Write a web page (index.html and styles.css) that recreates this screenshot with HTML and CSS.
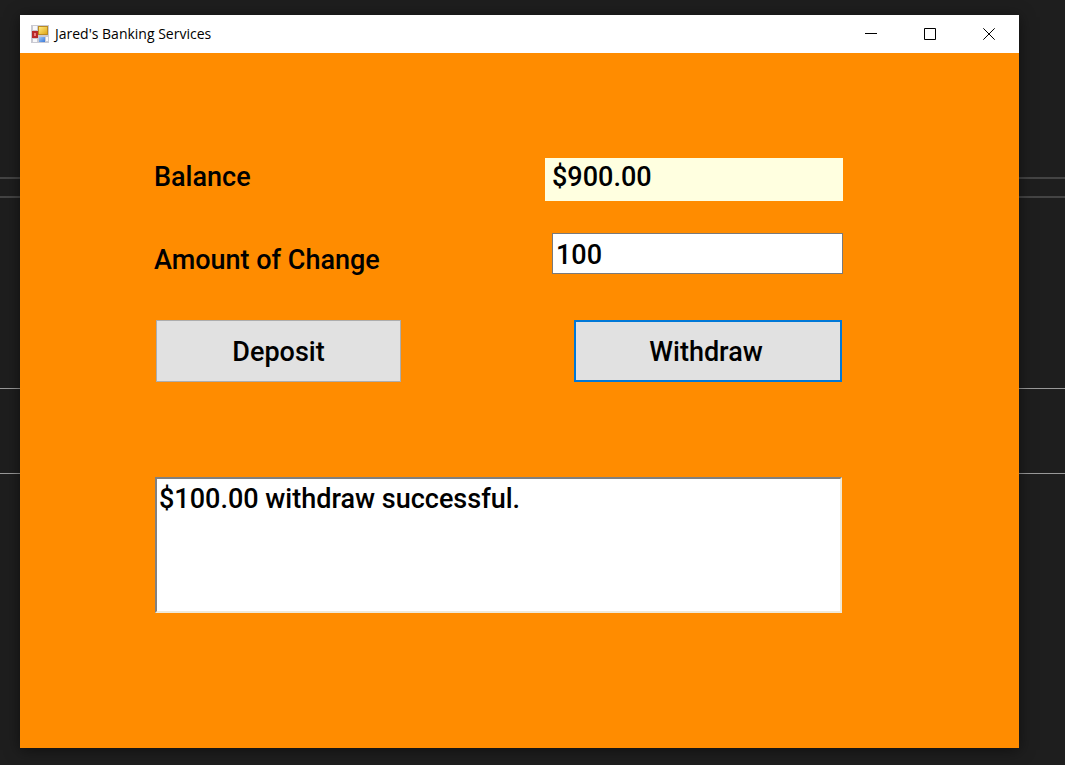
FILE: index.html
```
<!DOCTYPE html>
<html lang="en">
<head>
<meta charset="utf-8">
<title>Jared's Banking Services</title>
<link rel="stylesheet" href="styles.css">
</head>
<body>
<main class="window">
  <header class="titlebar">
    <svg class="app-icon" width="18" height="18" viewBox="0 0 18 18" aria-hidden="true">
      <defs>
        <linearGradient id="gold" x1="0" y1="0" x2="1" y2="1"><stop offset="0" stop-color="#ffe980"/><stop offset="1" stop-color="#e0a818"/></linearGradient>
        <linearGradient id="blue" x1="0" y1="0" x2="1" y2="1"><stop offset="0" stop-color="#9cc8fa"/><stop offset="1" stop-color="#3878d8"/></linearGradient>
      </defs>
      <path fill="#cacad2" d="M0 0h18v18H0z"/>
      <path fill="#f8f8fa" d="M2 1h4v4H2zM2 14h4v3H2zM15 12h2v4h-2z"/>
      <path fill="#b82a2a" d="M1 6h6v7H1z"/>
      <path fill="#e88080" d="M3 8h2v3H3z"/>
      <path fill="#b98a24" d="M7 1h10v9H7z"/>
      <path fill="url(#gold)" d="M8 2h8v7H8z"/>
      <path fill="url(#blue)" d="M8 12h6v5H8z"/>
    </svg>
    <h1 class="title">Jared's Banking Services</h1>
    <div class="controls">
      <button class="control" type="button" aria-label="Minimize"><svg width="12" height="12" viewBox="0 0 12 12"><path d="M0 5.5h12"/></svg></button>
      <button class="control" type="button" aria-label="Maximize"><svg width="12" height="12" viewBox="0 0 12 12"><path d="M.5.5h11v11H.5z"/></svg></button>
      <button class="control" type="button" aria-label="Close"><svg width="12" height="12" viewBox="0 0 12 12"><path d="M.3.3l11.4 11.4M11.7.3L.3 11.7"/></svg></button>
    </div>
  </header>
  <form class="form">
    <div class="row balance-row">
      <label class="label" for="balance">Balance</label>
      <output class="balance" id="balance">$900.00</output>
    </div>
    <div class="row amount-row">
      <label class="label amount-label" for="amount">Amount of Change</label>
      <input class="amount" id="amount" type="text" value="100">
    </div>
    <div class="row action-row">
      <button class="action deposit" type="button">Deposit</button>
      <button class="action withdraw" type="button">Withdraw</button>
    </div>
    <textarea class="log" aria-label="Messages" readonly>$100.00 withdraw successful.</textarea>
  </form>
</main>
</body>
</html>
```
FILE: styles.css
```
* {
  box-sizing: border-box;
}

body {
  display: flex;
  min-height: 100vh;
  margin: 0;
  padding: 15px 46px 17px 20px;
  color: #000;
  background:
    linear-gradient(#444, #444) 0 177px / 100% 2px no-repeat,
    linear-gradient(#444, #444) 0 196px / 100% 2px no-repeat,
    linear-gradient(#999, #999) 0 388px / 100% 1px no-repeat,
    linear-gradient(#999, #999) 0 473px / 100% 1px no-repeat,
    #1e1e1e;
}

.window {
  display: flex;
  flex: 1;
  flex-direction: column;
  background: #ff8c00;
  box-shadow: 0 2px 14px rgba(0, 0, 0, 0.5);
}

.titlebar {
  display: flex;
  align-items: center;
  height: 38px;
  padding: 0 1px 0 11px;
  background: #fff;
}

.title {
  margin: 0 auto 0 6px;
  font: 400 14px/20px "Open Sans", sans-serif;
}

.controls {
  display: flex;
  align-self: stretch;
}

.control {
  display: grid;
  place-items: center;
  width: 59px;
  padding: 0;
  border: 0;
  background: transparent;
}

.control path {
  fill: none;
  stroke: #000;
}

.form {
  display: flex;
  flex-direction: column;
  padding: 105px 176px 48px 134px;
  font: 500 27px/38px Roboto, sans-serif;
}

.row {
  display: flex;
  align-items: flex-start;
  justify-content: space-between;
}

.balance-row {
  margin-bottom: 32px;
}

.balance {
  width: 298px;
  height: 43px;
  padding-left: 7px;
  background: #ffffe0;
}

.amount-row {
  margin-bottom: 41px;
}

.amount-label {
  padding-top: 8px;
}

.amount {
  width: 291px;
  height: 41px;
  padding: 2px 3px 0;
  border: 1px solid #7a7a7a;
  border-radius: 0;
  background: #fff;
  color: #000;
  font: inherit;
}

.action-row {
  margin: 0 1px 95px 2px;
}

.action {
  height: 62px;
  padding: 2px 0 0;
  border: 1px solid #adadad;
  background: #e1e1e1;
  color: #000;
  font: inherit;
}

.deposit {
  width: 245px;
}

.withdraw {
  width: 268px;
  padding-right: 4px;
  border: 2px solid #0078d7;
}

.log {
  height: 136px;
  margin: 0 1px;
  padding: 1px 2px;
  border: 2px solid;
  border-color: #808080 #f0ead8 #f0ead8 #808080;
  background: #fff;
  color: #000;
  font: inherit;
  resize: none;
}

.action:focus-visible,
.amount:focus-visible,
.log:focus-visible {
  outline: 1px dotted #000;
}
```
